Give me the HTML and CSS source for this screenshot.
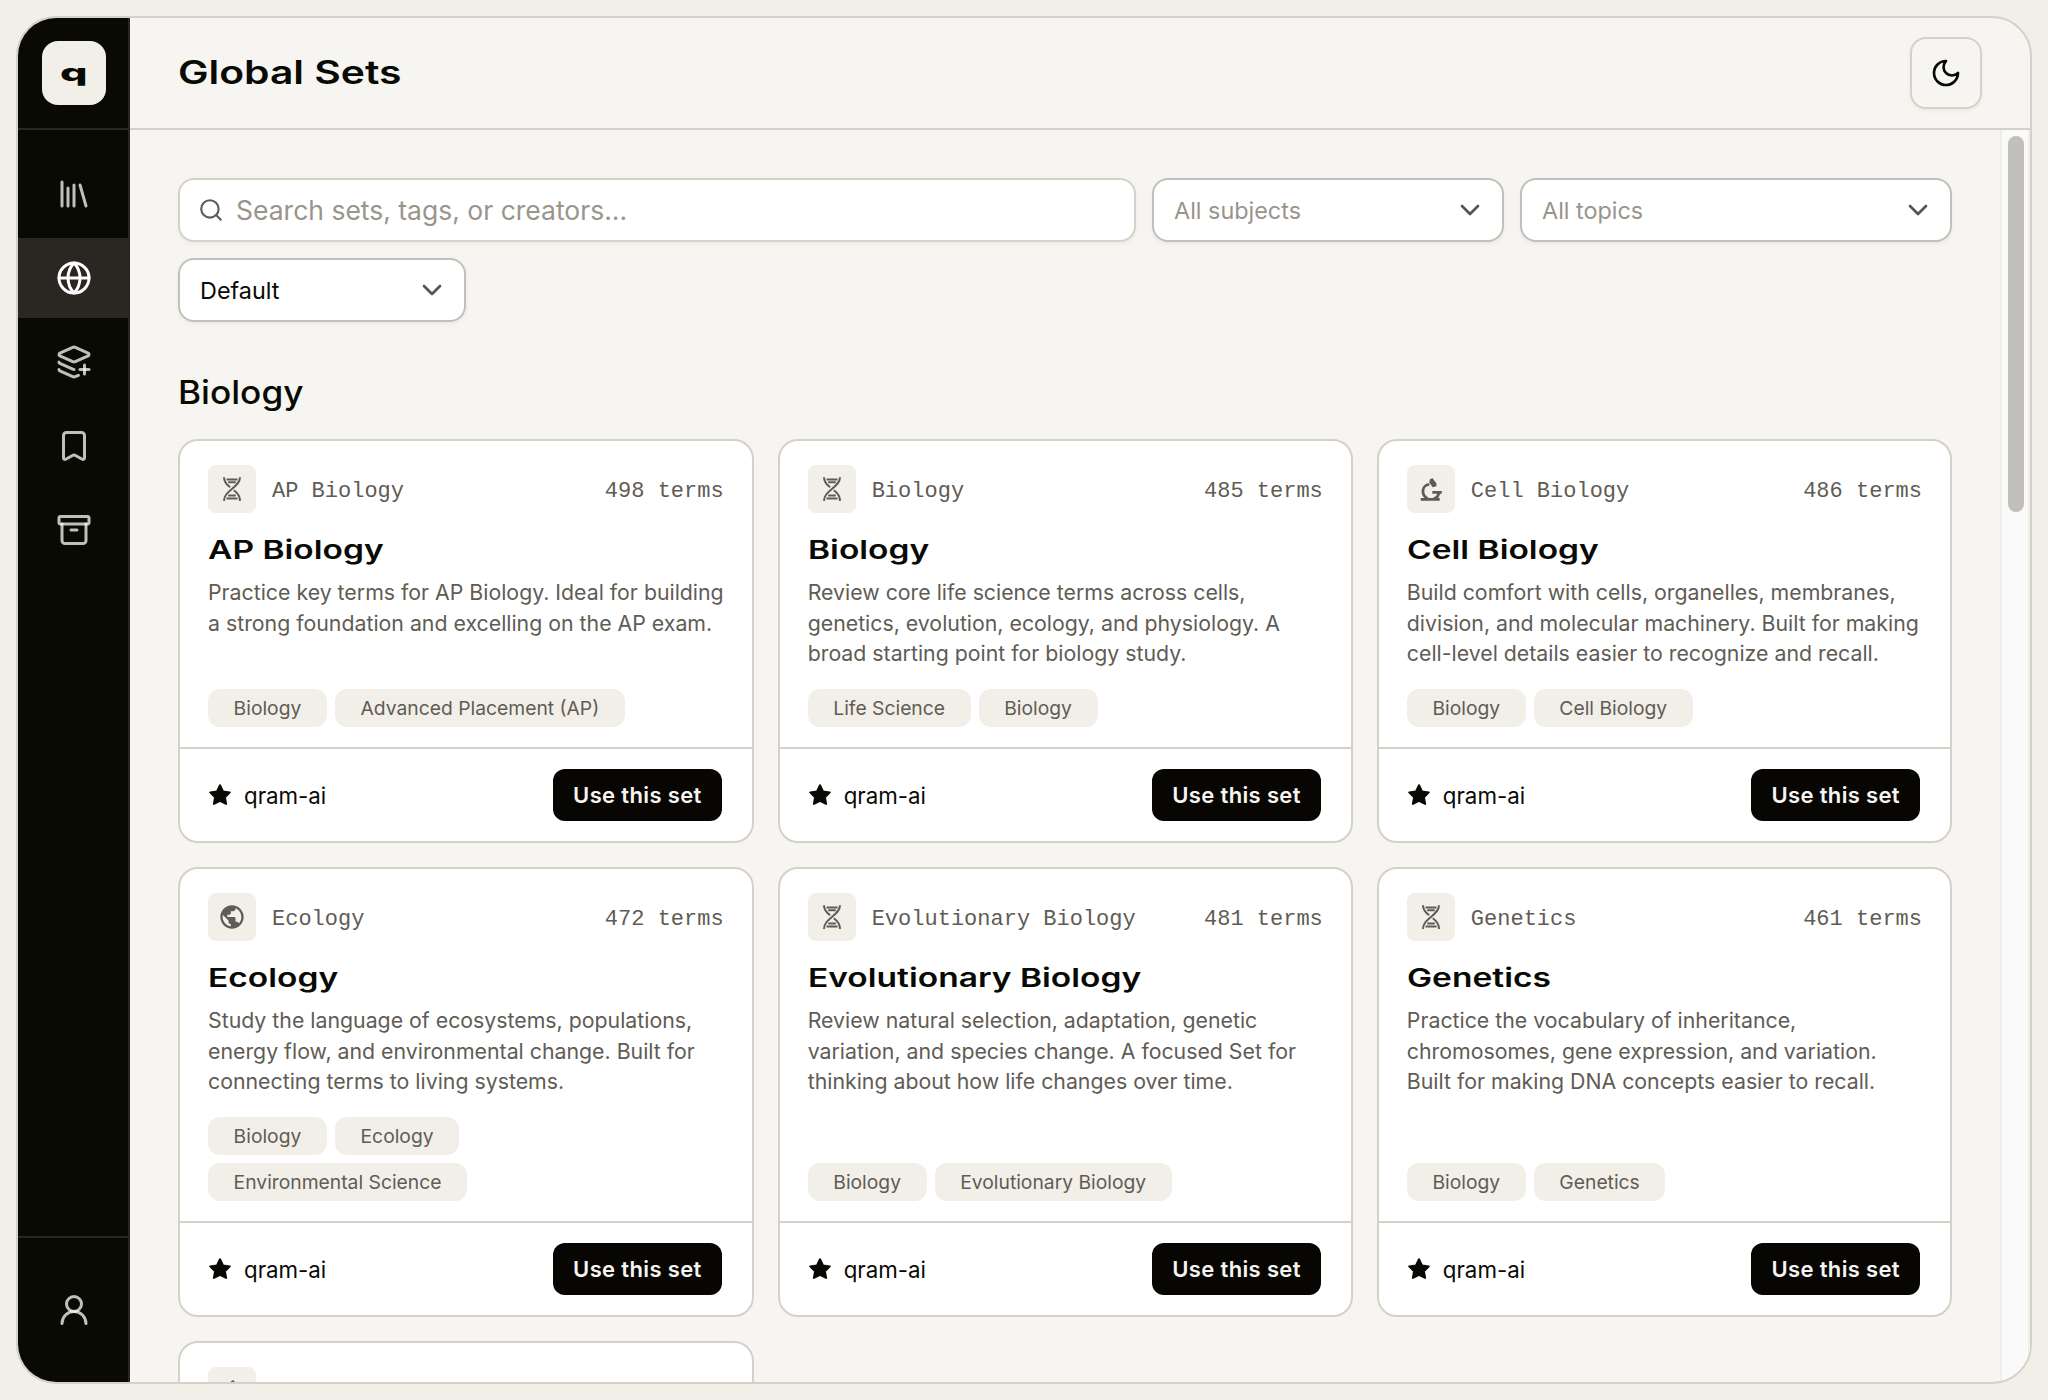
FILE: index.html
```html
<!DOCTYPE html>
<html lang="en">
<head>
  <meta charset="UTF-8" />
  <meta name="viewport" content="width=device-width, initial-scale=1.0"/>
  <title>Global Sets</title>
  <link rel="stylesheet" href="styles.css">
</head>
<body>
  <!-- Shared icons -->
  <svg class="sprite" width="0" height="0">
    <symbol id="dna" viewBox="0 0 48 48">
      <path d="M32 12.2C32 22.5 16 25 16 36"/>
      <path d="M16 12.2c0 5 3 7.800 6.200 10M25.800 25.200C29 27.500 32 30.500 32 36"/>
      <path d="M18.500 14.400h11M20.200 17.300h7.600M20.200 30.600h7.600M18.500 33.500h11"/>
    </symbol>
    <symbol id="microscope" viewBox="0 0 48 48">
      <path class="solid" d="M22.800 14.600l2.500-1.600 4 5.200.2 3-3.900 1-3.300-4.700z"/>
      <path class="thick" d="M22.300 19.400c-3.800.4-6.400 3.200-6.400 6.800 0 3.200 1.800 5.800 4.800 7.300M25.300 27.400h9.500M31.800 28c-.5 3-2.300 5-5 5.800M13.700 34.400h19"/>
    </symbol>
    <symbol id="earth" viewBox="0 0 24 24">
      <path class="solid" d="M12 2C6.480 2 2 6.480 2 12s4.480 10 10 10 10-4.480 10-10S17.520 2 12 2zm-1 17.930c-3.950-.49-7-3.850-7-7.930 0-.62.08-1.210.21-1.790L9 15v1c0 1.100.9 2 2 2v1.930zm6.900-2.540c-.26-.81-1-1.390-1.900-1.390h-1v-3c0-.55-.45-1-1-1H8v-2h2c.55 0 1-.45 1-1V7h2c1.100 0 2-.9 2-2v-.41c2.930 1.190 5 4.060 5 7.410 0 2.080-.8 3.970-2.100 5.390z"/>
    </symbol>
    <symbol id="star" viewBox="0 0 24 24">
      <path d="M12 2.200l3 6.200 6.800 1-4.900 4.800 1.200 6.700-6.100-3.100-6.100 3.100 1.200-6.700-4.900-4.800 6.800-1z"/>
    </symbol>
    <symbol id="chevron" viewBox="0 0 24 24"><path d="M6 9l6 6 6-6"/></symbol>
  </svg>

  <div class="app">
    <aside class="sidebar">
      <div class="brand"><div class="logo"><span>q</span></div></div>
      <nav class="nav">
        <a class="nav-item"><svg viewBox="0 0 24 24"><path d="M16 6l4 14M12 6v14M8 8v12M4 4v16"/></svg></a>
        <a class="nav-item active"><svg viewBox="0 0 24 24"><circle cx="12" cy="12" r="10"/><path d="M12 2a14.500 14.500 0 0 0 0 20 14.500 14.500 0 0 0 0-20M2 12h20"/></svg></a>
        <a class="nav-item"><svg viewBox="0 0 24 24"><path d="M12.830 2.180a2 2 0 0 0-1.660 0L2.600 6.080a1 1 0 0 0 0 1.830l8.580 3.910a2 2 0 0 0 .83.18 2 2 0 0 0 .83-.18l8.580-3.900a1 1 0 0 0 0-1.831z"/><path d="M16 17h6"/><path d="M19 14v6"/><path d="M2 12a1 1 0 0 0 .58.91l8.600 3.910a2 2 0 0 0 .825.178"/><path d="M2 17a1 1 0 0 0 .58.91l8.600 3.910a2 2 0 0 0 1.650 0l2.116-.962"/></svg></a>
        <a class="nav-item"><svg viewBox="0 0 24 24"><path d="M17 3a2 2 0 0 1 2 2v15a1 1 0 0 1-1.496.868l-4.512-2.578a2 2 0 0 0-1.984 0l-4.512 2.578A1 1 0 0 1 5 20V5a2 2 0 0 1 2-2z"/></svg></a>
        <a class="nav-item"><svg viewBox="0 0 24 24"><rect x="2" y="3" width="20" height="5" rx="1"/><path d="M4 8v11a2 2 0 0 0 2 2h12a2 2 0 0 0 2-2V8"/><path d="M10 12h4"/></svg></a>
      </nav>
      <div class="account"><svg viewBox="0 0 24 24"><circle cx="12" cy="8" r="5"/><path d="M20 21a8 8 0 0 0-16 0"/></svg></div>
    </aside>

    <div class="main">
      <header class="header">
        <h1>Global Sets</h1>
        <button class="theme-btn"><svg viewBox="0 0 24 24"><path d="M12 3a6 6 0 0 0 9 9 9 9 0 1 1-9-9Z"/></svg></button>
      </header>

      <div class="scroll-row">
        <div class="content">
          <div class="filters">
            <div class="field search">
              <svg viewBox="0 0 24 24"><circle cx="11" cy="11" r="8"/><path d="M21 21l-4.300-4.300"/></svg>
              <span>Search sets, tags, or creators...</span>
            </div>
            <div class="field select subjects"><span>All subjects</span><svg><use href="#chevron"/></svg></div>
            <div class="field select topics"><span>All topics</span><svg><use href="#chevron"/></svg></div>
            <div class="field select sort"><span>Default</span><svg><use href="#chevron"/></svg></div>
          </div>

          <h2>Biology</h2>

          <div class="grid">
            <article class="card">
              <div class="card-body">
                <div class="card-head">
                  <div class="badge"><svg><use href="#dna"/></svg></div>
                  <span>AP Biology</span><span class="count">498 terms</span>
                </div>
                <h3>AP Biology</h3>
                <p>Practice key terms for AP Biology. Ideal for building<br>a strong foundation and excelling on the AP exam.</p>
                <div class="tags"><span>Biology</span><span>Advanced Placement (AP)</span></div>
              </div>
              <div class="card-foot"><svg><use href="#star"/></svg><span>qram-ai</span><button>Use this set</button></div>
            </article>

            <article class="card">
              <div class="card-body">
                <div class="card-head">
                  <div class="badge"><svg><use href="#dna"/></svg></div>
                  <span>Biology</span><span class="count">485 terms</span>
                </div>
                <h3>Biology</h3>
                <p>Review core life science terms across cells,<br>genetics, evolution, ecology, and physiology. A<br>broad starting point for biology study.</p>
                <div class="tags"><span>Life Science</span><span>Biology</span></div>
              </div>
              <div class="card-foot"><svg><use href="#star"/></svg><span>qram-ai</span><button>Use this set</button></div>
            </article>

            <article class="card">
              <div class="card-body">
                <div class="card-head">
                  <div class="badge"><svg><use href="#microscope"/></svg></div>
                  <span>Cell Biology</span><span class="count">486 terms</span>
                </div>
                <h3>Cell Biology</h3>
                <p>Build comfort with cells, organelles, membranes,<br>division, and molecular machinery. Built for making<br>cell-level details easier to recognize and recall.</p>
                <div class="tags"><span>Biology</span><span>Cell Biology</span></div>
              </div>
              <div class="card-foot"><svg><use href="#star"/></svg><span>qram-ai</span><button>Use this set</button></div>
            </article>

            <article class="card">
              <div class="card-body">
                <div class="card-head">
                  <div class="badge"><svg class="earth"><use href="#earth"/></svg></div>
                  <span>Ecology</span><span class="count">472 terms</span>
                </div>
                <h3>Ecology</h3>
                <p>Study the language of ecosystems, populations,<br>energy flow, and environmental change. Built for<br>connecting terms to living systems.</p>
                <div class="tags"><span>Biology</span><span>Ecology</span><span>Environmental Science</span></div>
              </div>
              <div class="card-foot"><svg><use href="#star"/></svg><span>qram-ai</span><button>Use this set</button></div>
            </article>

            <article class="card">
              <div class="card-body">
                <div class="card-head">
                  <div class="badge"><svg><use href="#dna"/></svg></div>
                  <span>Evolutionary Biology</span><span class="count">481 terms</span>
                </div>
                <h3>Evolutionary Biology</h3>
                <p>Review natural selection, adaptation, genetic<br>variation, and species change. A focused Set for<br>thinking about how life changes over time.</p>
                <div class="tags"><span>Biology</span><span>Evolutionary Biology</span></div>
              </div>
              <div class="card-foot"><svg><use href="#star"/></svg><span>qram-ai</span><button>Use this set</button></div>
            </article>

            <article class="card">
              <div class="card-body">
                <div class="card-head">
                  <div class="badge"><svg><use href="#dna"/></svg></div>
                  <span>Genetics</span><span class="count">461 terms</span>
                </div>
                <h3>Genetics</h3>
                <p>Practice the vocabulary of inheritance,<br>chromosomes, gene expression, and variation.<br>Built for making DNA concepts easier to recall.</p>
                <div class="tags"><span>Biology</span><span>Genetics</span></div>
              </div>
              <div class="card-foot"><svg><use href="#star"/></svg><span>qram-ai</span><button>Use this set</button></div>
            </article>

            <article class="card">
              <div class="card-body">
                <div class="card-head">
                  <div class="badge"><svg><use href="#microscope"/></svg></div>
                </div>
              </div>
            </article>
          </div>
        </div>
        <div class="scrollbar"><div class="thumb"></div></div>
      </div>
    </div>
  </div>
</body>
</html>
```
FILE: styles.css
```css
* {
  margin: 0;
  padding: 0;
  box-sizing: border-box;
}

body {
  height: 1400px;
  padding: 16px;
  background: #f2efe8;
  font-family: Inter, sans-serif;
  color: #0a0a05;
  overflow: hidden;
}

.sprite {
  display: block;
}

svg {
  fill: none;
  stroke: currentColor;
  stroke-width: 2;
  stroke-linecap: round;
  stroke-linejoin: round;
  flex-shrink: 0;
}

button {
  font-family: inherit;
  border: none;
}

.app {
  display: flex;
  width: 2016px;
  height: 1368px;
  border: 2px solid #d6d1c8;
  border-radius: 40px;
  overflow: hidden;
  background: #f6f5f1;
}

/* Sidebar */
.sidebar {
  display: flex;
  flex-direction: column;
  width: 112px;
  background: #0a0a05;
  border-right: 2px solid #2a2723;
  color: rgba(250, 249, 244, 0.76);
}

.sidebar svg {
  width: 36px;
  height: 36px;
}

.brand {
  height: 112px;
  padding: 23px 0 0 24px;
  border-bottom: 2px solid #2a2723;
}

.logo {
  display: flex;
  align-items: center;
  justify-content: center;
  width: 64px;
  height: 64px;
  border-radius: 16px;
  background: #f2efe8;
  color: #0a0a05;
}

.logo span {
  font-size: 24px;
  font-weight: 800;
  line-height: 30px;
  transform: scaleX(1.8);
}

.nav {
  flex: 1;
  display: flex;
  flex-direction: column;
  gap: 4px;
  padding-top: 24px;
}

.nav-item {
  display: flex;
  align-items: center;
  justify-content: center;
  height: 80px;
  padding-left: 2px;
}

.nav-item.active {
  background: #2a2723;
  color: #fff;
}

.account {
  display: flex;
  align-items: center;
  justify-content: center;
  height: 146px;
  padding-left: 2px;
  border-top: 2px solid #2a2723;
}

/* Header */
.main {
  flex: 1;
  display: flex;
  flex-direction: column;
  min-width: 0;
}

.header {
  display: flex;
  align-items: center;
  justify-content: space-between;
  height: 112px;
  padding: 0 48px;
  border-bottom: 2px solid #d6d1c8;
}

h1 {
  font-size: 32px;
  font-weight: 600;
  line-height: 40px;
  transform: scaleX(1.275);
  transform-origin: left;
}

.theme-btn {
  display: flex;
  align-items: center;
  justify-content: center;
  width: 72px;
  height: 72px;
  border: 2px solid #d6d1c8;
  border-radius: 16px;
  background: #f6f5f1;
  color: #0a0a05;
  box-shadow: 0 2px 4px rgba(120, 110, 70, 0.08);
}

.theme-btn svg {
  width: 32px;
  height: 32px;
}

/* Scroll area */
.scroll-row {
  flex: 1;
  display: flex;
  min-height: 0;
}

.content {
  flex: 1;
  padding: 48px 48px 0;
  overflow: hidden;
}

.scrollbar {
  width: 30px;
  padding: 6px 4px 0 6px;
  background: #fafafa;
  border-left: 2px solid #f1eee8;
  border-right: 2px solid #f1eee8;
}

.thumb {
  width: 16px;
  height: 376px;
  border-radius: 8px;
  background: #c0bfbb;
}

/* Filters */
.filters {
  display: flex;
  flex-wrap: wrap;
  gap: 16px;
}

.field {
  display: flex;
  align-items: center;
  height: 64px;
  border: 2px solid #c1c0bb;
  border-radius: 16px;
  background: #fff;
  box-shadow: 0 2px 4px rgba(120, 110, 70, 0.08);
}

.search {
  width: 958px;
  padding-left: 18px;
  border-color: #d6d1c8;
  color: #99958b;
  font-size: 26.5px;
}

.search svg {
  width: 26px;
  height: 26px;
  margin-right: 12px;
  color: #5f5c55;
}

.select {
  justify-content: space-between;
  padding: 0 16px 0 20px;
  font-size: 23.4px;
  color: #99958b;
}

.select svg {
  width: 32px;
  height: 32px;
  color: #57544e;
}

.subjects {
  width: 352px;
}

.topics {
  width: 432px;
}

.sort {
  width: 288px;
  color: #0a0a05;
}

h2 {
  width: max-content;
  margin: 48px 0 24px;
  font-size: 32px;
  font-weight: 500;
  line-height: 45px;
  transform: scaleX(1.1);
  transform-origin: left;
}

/* Cards */
.grid {
  display: grid;
  grid-template-columns: repeat(3, 1fr);
  gap: 24px;
}

.card {
  display: flex;
  flex-direction: column;
  border: 2px solid #d6d1c8;
  border-radius: 20px;
  background: #fff;
}

.card-body {
  flex: 1;
  display: flex;
  flex-direction: column;
  padding: 24px 28px 20px;
}

.card-head {
  display: flex;
  align-items: center;
  height: 48px;
  font-family: "Liberation Mono", monospace;
  font-size: 22px;
  color: #5f5c55;
}

.card-head span {
  padding-top: 4px;
}

.badge {
  display: flex;
  align-items: center;
  justify-content: center;
  width: 48px;
  height: 48px;
  margin-right: 16px;
  border-radius: 8px;
  background: #f2efe8;
}

.badge svg {
  width: 48px;
  height: 48px;
  stroke-linecap: butt;
}

.badge .earth {
  width: 28px;
  height: 28px;
}

.solid {
  fill: currentColor;
  stroke: none;
}

.thick {
  stroke-width: 2.8;
}

.count {
  margin-left: auto;
}

h3 {
  width: max-content;
  margin-top: 20px;
  font-size: 26px;
  font-weight: 600;
  line-height: 34px;
  transform: scaleX(1.29);
  transform-origin: left;
}

.card p {
  min-height: 92px;
  margin-top: 10px;
  font-size: 21.3px;
  line-height: 30.6px;
  color: #5f5c55;
  white-space: nowrap;
}

.tags {
  display: flex;
  flex-wrap: wrap;
  gap: 8px;
  max-width: 440px;
  margin-top: auto;
  padding-top: 20px;
}

.tags span {
  height: 38px;
  padding: 0 25.600px;
  border-radius: 12px;
  background: #f2efe8;
  font-size: 19.3px;
  line-height: 38px;
  color: #5f5c55;
}

.card-foot {
  display: flex;
  align-items: center;
  height: 94px;
  padding: 0 30px 0 28px;
  border-top: 2px solid #d6d1c8;
  font-size: 22.3px;
}

.card-foot svg {
  width: 24px;
  height: 24px;
  margin-right: 12px;
  fill: currentColor;
}

.card-foot button {
  height: 52px;
  margin-left: auto;
  padding: 0 20px;
  border-radius: 12px;
  background: #080603;
  color: #f6f5f1;
  font-size: 22px;
  font-weight: 600;
  letter-spacing: 0.35px;
}
```
